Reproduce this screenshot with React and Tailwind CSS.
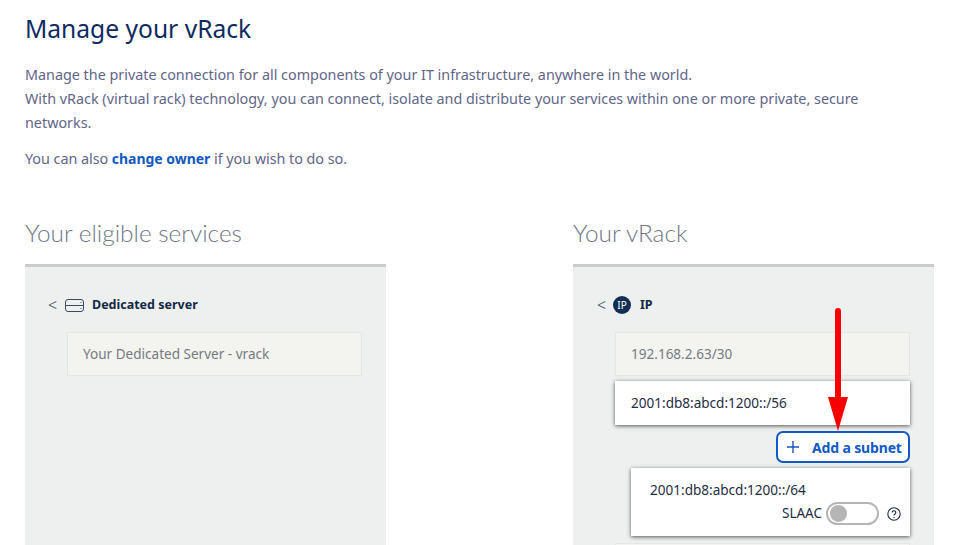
import React from "react";

const font = "font-['Noto_Sans',sans-serif]";

const ServerIcon = () => (
  <svg width="19" height="13" viewBox="0 0 19 13" fill="none" stroke="#3c4a60" strokeWidth="1">
    <rect x="0.5" y="0.5" width="18" height="12" rx="2.5" />
    <path d="M0.5 6.5h18" />
    <path d="M15.5 3.5h1M15.5 9.5h1" />
  </svg>
);

const Arrow = () => (
  <svg className="absolute left-[253px] top-[93px]" width="24" height="124" viewBox="0 0 24 124" fill="#f90000">
    <path d="M9 3a3 3 0 0 1 6 0v86h-6z" />
    <path d="M2 89h20l-10 34z" />
  </svg>
);

const Item = ({ children }) => (
  <div className="flex h-[44px] items-center border border-[#e3e6e3] bg-[#f3f4f0] pl-[15px] text-[13.55px] text-[#757a80]">
    {children}
  </div>
);

const App = () => {
  return (
    <div className={`h-[545px] w-[960px] overflow-hidden bg-white px-[25px] ${font}`}>
      <h1 className="pt-[10px] text-[24.6px] leading-[38px] text-[#0f2a5f]">Manage your vRack</h1>
      <div className="mt-[15px] text-[14.35px] leading-[24px] text-[#5f6589]">
        <p>Manage the private connection for all components of your IT infrastructure, anywhere in the world.</p>
        <p>
          With vRack (virtual rack) technology, you can connect, isolate and distribute your services within one or more private, secure
          <br />
          networks.
        </p>
        <p className="mt-[12px] tracking-[-0.03px]">
          You can also <a className="text-[14px] font-bold text-[#1159c4]">change owner</a> if you wish to do so.
        </p>
      </div>

      <div className="mt-[44px] grid grid-cols-[361px_361px] gap-x-[187px]">
        <section>
          <h2 className="font-['Lato',sans-serif] text-[24.4px] font-light leading-[36px] text-[#6f7785]">Your eligible services</h2>
          <div className="mt-[13px] h-[300px] border-t-[3px] border-[#c8cccc] bg-[#edf0ee] pt-[28px]">
            <div className="flex h-[20px] items-center pl-[23px]">
              <span className="w-[17px] text-[16px] font-light text-[#4a5568]">&lt;</span>
              <ServerIcon />
              <span className="ml-[8px] text-[12.5px] font-bold text-[#122844]">Dedicated server</span>
            </div>
            <div className="ml-[42px] mt-[17px] w-[295px]">
              <Item>Your Dedicated Server - vrack</Item>
            </div>
          </div>
        </section>

        <section className="relative">
          <h2 className="font-['Lato',sans-serif] text-[24.4px] font-light leading-[36px] text-[#6f7785]">Your vRack</h2>
          <div className="mt-[13px] h-[300px] border-t-[3px] border-[#c8cccc] bg-[#edf0ee] pt-[28px]">
            <div className="flex h-[20px] items-center pl-[24px]">
              <span className="w-[16px] text-[16px] font-light text-[#4a5568]">&lt;</span>
              <span className="flex h-[18px] w-[18px] items-center justify-center rounded-full bg-[#122e52] text-[10px] text-white">IP</span>
              <span className="ml-[9px] text-[12.5px] font-bold text-[#122844]">IP</span>
            </div>
            <div className="ml-[42px] mt-[17px] w-[295px]">
              <Item>192.168.2.63/30</Item>
              <div className="mt-[5px] flex h-[44px] items-center bg-white pl-[16px] text-[13.55px] text-[#1f2c44] shadow-[0_1px_4px_rgba(0,0,0,0.65)]">
                2001:db8:abcd:1200::/56
              </div>
              <div className="mt-[6px] flex justify-end">
                <button className="flex h-[32px] w-[134px] items-center rounded-[7px] border-2 border-[#1159c4] bg-white pl-[7px] text-[14px] font-bold text-[#1159c4]">
                  <svg width="16" height="16" viewBox="0 0 16 16" stroke="#1159c4" strokeWidth="1.4">
                    <path d="M8 2v12M2 8h12" />
                  </svg>
                  <span className="ml-[11px] whitespace-nowrap tracking-[-0.15px]">Add a subnet</span>
                </button>
              </div>
              <div className="ml-[16px] mt-[5px] h-[68px] bg-white pl-[19px] pr-[9px] pt-[12px] text-[13.55px] text-[#1f2c44] shadow-[0_1px_4px_rgba(0,0,0,0.65)]">
                <p className="leading-[20px]">2001:db8:abcd:1200::/64</p>
                <div className="mt-[2px] flex items-center justify-end">
                  <span className="text-[13.5px]">SLAAC</span>
                  <span className="ml-[4px] flex h-[23px] w-[53px] items-center rounded-full border-2 border-[#b5b5b5] bg-white pl-[2px]">
                    <span className="h-[17px] w-[17px] rounded-full bg-[#b5b5b5]" />
                  </span>
                  <svg className="ml-[8px]" width="14" height="14" viewBox="0 0 14 14" fill="none" stroke="#1f2c44" strokeWidth="1.1">
                    <circle cx="7" cy="7" r="6.2" />
                    <path d="M5.2 5.5a1.8 1.8 0 1 1 2.8 1.5c-.7.4-1 .7-1 1.5" />
                    <path d="M7 10v1" />
                  </svg>
                </div>
              </div>
              <div className="mt-[7px]">
                <Item>&nbsp;</Item>
              </div>
            </div>
          </div>
          <Arrow />
        </section>
      </div>
    </div>
  );
};

export default App;
